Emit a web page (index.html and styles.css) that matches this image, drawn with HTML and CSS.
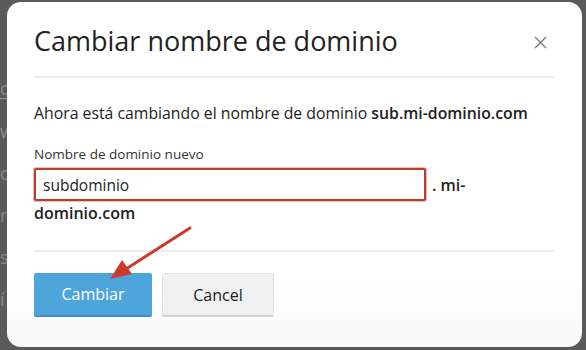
FILE: index.html
```html
<!DOCTYPE html>
<html lang="es">
<head>
<meta charset="utf-8">
<title>Cambiar nombre de dominio</title>
<link rel="stylesheet" href="styles.css">
</head>
<body>
<div class="backdrop">
  <div class="bg-text">
    <span class="bg-line">c</span>
    <span>w</span>
    <span>c</span>
    <span>r</span>
    <span>s</span>
    <span>í</span>
  </div>
  <div class="dialog">
    <div class="header">
      <h1 class="title">Cambiar nombre de dominio</h1>
      <span class="close">
        <svg width="13" height="13" viewBox="0 0 13 13"><path d="M1 1L12 12M12 1L1 12" stroke="#7a7a7a" stroke-width="1.3" fill="none"/></svg>
      </span>
    </div>
    <div class="content">
      <p class="intro">Ahora está cambiando el nombre de dominio <strong>sub.mi-dominio.com</strong></p>
      <label class="label" for="dom">Nombre de dominio nuevo</label>
      <div class="field"><input id="dom" class="input" type="text" value="subdominio"><span class="suffix">. mi-dominio.com</span></div>
    </div>
    <div class="footer">
      <button class="btn btn-primary">Cambiar</button>
      <button class="btn btn-default">Cancel</button>
    </div>
    <svg class="arrow" width="90" height="60" viewBox="0 0 90 60">
      <path d="M86 4L22 45" stroke="#cc3a2b" stroke-width="3" stroke-linecap="round" fill="none"/>
      <path d="M6 55L18 36L28 50Z" fill="#cc3a2b"/>
    </svg>
  </div>
</div>
</body>
</html>
```
FILE: styles.css
```css
html, body {
  margin: 0;
  padding: 0;
}
body {
  background: #5a5a5a;
  font-family: "Open Sans", "Noto Sans", sans-serif;
  color: #222;
  width: 586px;
  height: 350px;
  overflow: hidden;
}
.backdrop {
  position: relative;
  width: 586px;
  height: 350px;
}
.bg-text {
  position: absolute;
  left: 0;
  top: 78px;
  display: flex;
  flex-direction: column;
  gap: 22px;
  font-size: 18px;
  color: #8a8a8a;
  line-height: 20px;
}
.bg-line {
  border-bottom: 1px solid #9a9a9a;
  width: 12px;
}
.dialog {
  position: absolute;
  left: 7px;
  top: 2px;
  width: 575px;
  height: 345px;
  background: linear-gradient(#ffffff 80%, #f8f8f8);
  border-radius: 14px;
  box-sizing: border-box;
  padding: 0 28px 0 27px;
}
.header {
  display: flex;
  align-items: center;
  justify-content: space-between;
  height: 74px;
  border-bottom: 2px solid #ebebeb;
}
.title {
  margin: 0;
  font-size: 27px;
  font-weight: 400;
  line-height: 36px;
  padding-top: 4px;
  color: #222;
}
.close {
  display: flex;
  margin-right: 7px;
  margin-top: 6px;
}
.content {
  padding-top: 23px;
  height: 149px;
  border-bottom: 2px solid #ebebeb;
}
.intro {
  margin: 0;
  font-size: 15.8px;
  line-height: 24px;
}
.intro strong {
  font-weight: 600;
}
.label {
  display: block;
  margin-top: 20px;
  font-size: 13.5px;
  line-height: 18px;
  color: #333;
}
.field {
  margin-top: 5px;
  width: 520px;
  font-size: 16px;
  line-height: 20px;
  font-weight: 600;
}
.input {
  box-sizing: border-box;
  width: 392px;
  height: 33px;
  border: 2px solid #bd3a2f;
  box-shadow: 0 0 0 1px rgba(200, 70, 60, 0.35);
  border-radius: 2px;
  padding: 0 7px;
  font-family: "Open Sans", "Noto Sans", sans-serif;
  font-size: 15.5px;
  color: #222;
  vertical-align: middle;
  outline: none;
  margin-right: 6px;
}
.suffix {
  vertical-align: middle;
}
.footer {
  display: flex;
  gap: 10px;
  padding-top: 21px;
}
.btn {
  height: 44px;
  font-family: "Open Sans", "Noto Sans", sans-serif;
  font-size: 16px;
  border-radius: 2px;
  cursor: pointer;
}
.btn-primary {
  width: 118px;
  background: #4ea5dc;
  color: #fff;
  border: 0;
  border-bottom: 2px solid #3f8fc4;
}
.btn-default {
  width: 112px;
  background: #f0f0f0;
  color: #222;
  border: 1px solid #e2e2e2;
  border-bottom: 2px solid #d2d2d2;
}
.arrow {
  position: absolute;
  left: 97px;
  top: 222px;
}
```
